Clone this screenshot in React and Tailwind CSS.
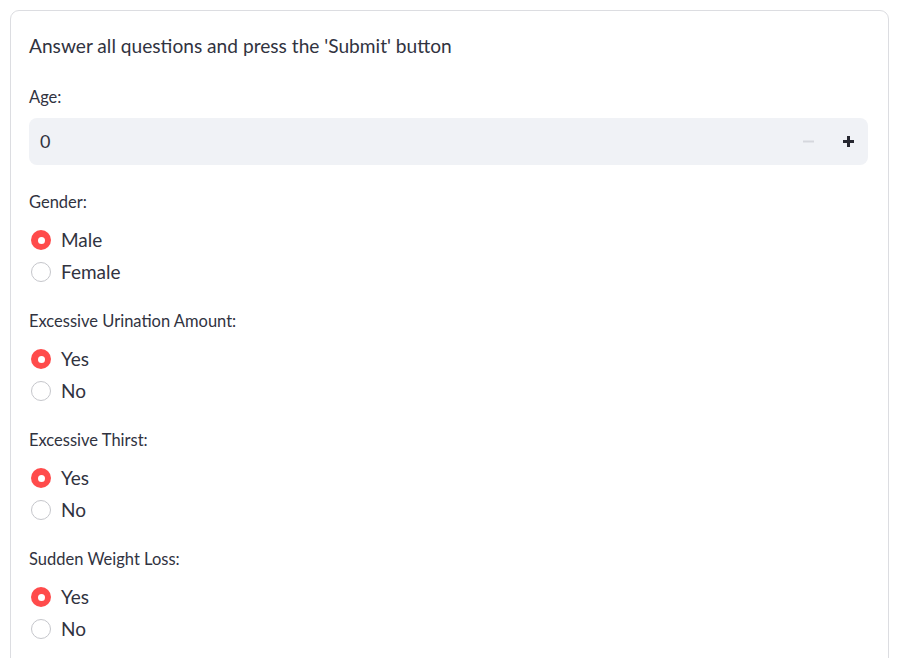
import React from 'react';

const font = { fontFamily: '"Source Sans Pro", Lato, "Noto Sans", sans-serif' };

const Radio = ({ checked, label }) => (
    <div className="flex items-center h-[32px]">
        {checked ? (
            <span className="w-[20px] h-[20px] rounded-full bg-[#ff4b4b] flex items-center justify-center ml-[2px]">
                <span className="w-[7px] h-[7px] rounded-full bg-white" />
            </span>
        ) : (
            <span className="w-[20px] h-[20px] rounded-full border-[1.5px] border-[#c5c6cb] bg-white ml-[2px]" />
        )}
        <span className="ml-[10px] text-[19px] text-[#31333F] leading-[32px]">{label}</span>
    </div>
);

const Question = ({ label, options, selected, first }) => (
    <div className={first ? '' : 'mt-[23px]'}>
        <div className="text-[16.5px] leading-[20px] text-[#31333F]">{label}</div>
        <div className="mt-[12px]">
            {options.map((o) => (
                <Radio key={o} label={o} checked={o === selected} />
            ))}
        </div>
    </div>
);

export default function App() {
    const questions = [
        { label: 'Gender:', options: ['Male', 'Female'], selected: 'Male' },
        { label: 'Excessive Urination Amount:', options: ['Yes', 'No'], selected: 'Yes' },
        { label: 'Excessive Thirst:', options: ['Yes', 'No'], selected: 'Yes' },
        { label: 'Sudden Weight Loss:', options: ['Yes', 'No'], selected: 'Yes' },
    ];

    return (
        <div className="bg-white h-[658px] pt-[10px] pl-[10px] overflow-hidden" style={font}>
            <div className="w-[879px] min-h-[660px] border border-[#dcdde1] rounded-[9px] pt-[22px] pl-[18px] pr-[20px]">
                {/* Heading */}
                <div className="text-[19.15px] leading-[26px] text-[#31333F]">
                    Answer all questions and press the 'Submit' button
                </div>

                {/* Age number input */}
                <div className="mt-[28px] text-[16.5px] leading-[20px] text-[#31333F]">Age:</div>
                <div className="mt-[11px] h-[47px] rounded-[8px] bg-[#f0f2f6] flex items-center pl-[11px]">
                    <span className="flex-1 text-[18px] text-[#31333F]">0</span>
                    <span className="w-[40px] h-full flex items-center justify-center">
                        <svg width="11" height="11" viewBox="0 0 11 11">
                            <rect x="0" y="4.5" width="11" height="2" fill="#d5d7dd" />
                        </svg>
                    </span>
                    <span className="w-[40px] h-full flex items-center justify-center">
                        <svg width="11" height="11" viewBox="0 0 11 11">
                            <rect x="0" y="4" width="11" height="3" fill="#262730" />
                            <rect x="4" y="0" width="3" height="11" fill="#262730" />
                        </svg>
                    </span>
                </div>

                {/* Radio questions */}
                <div className="mt-[27px]">
                    {questions.map((q, i) => (
                        <Question key={q.label} first={i === 0} {...q} />
                    ))}
                </div>
            </div>
        </div>
    );
}
